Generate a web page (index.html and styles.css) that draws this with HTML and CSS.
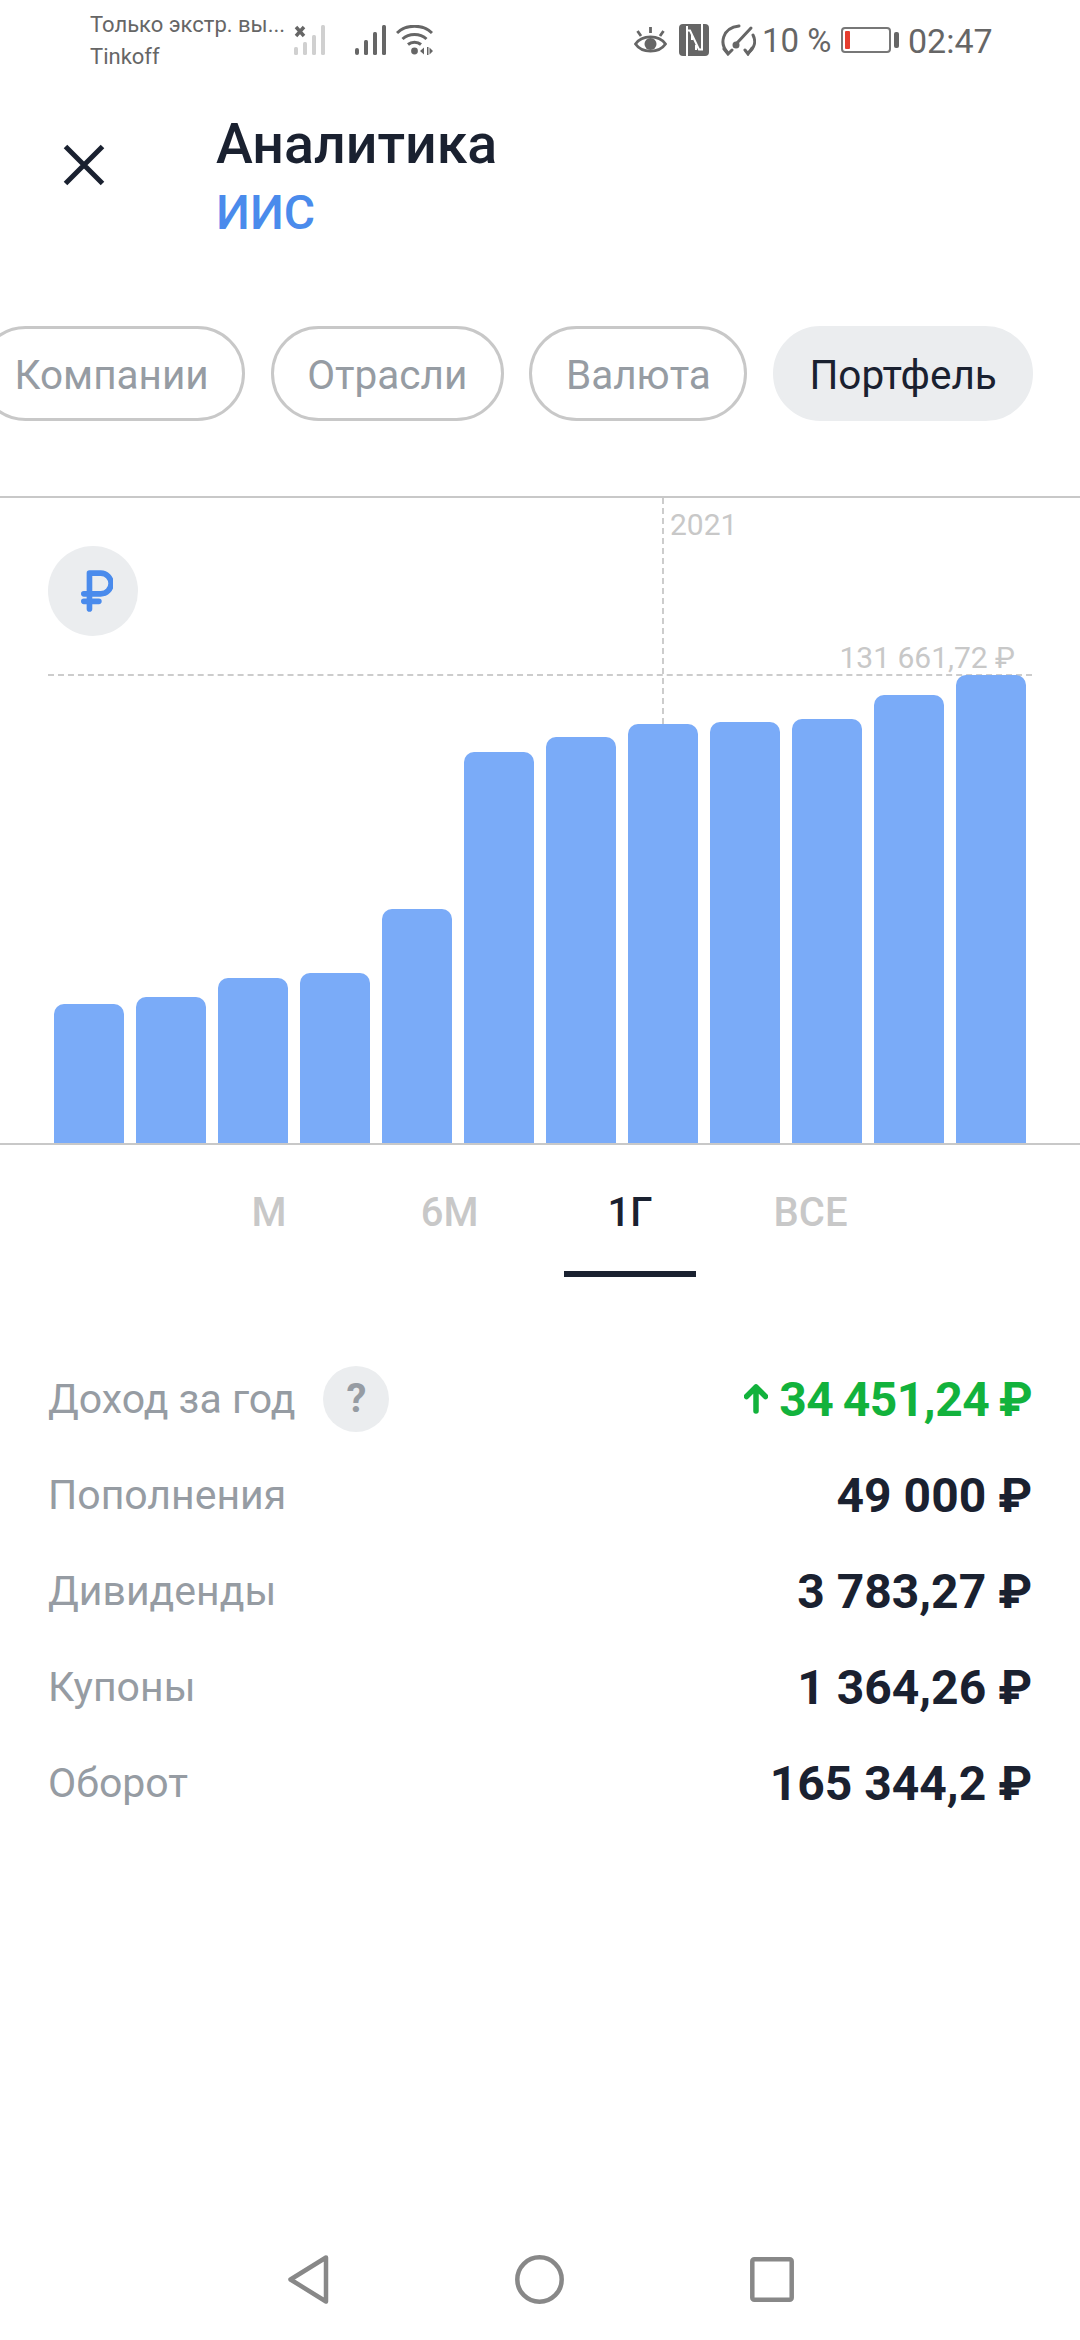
FILE: index.html
```html
<!DOCTYPE html>
<html lang="ru">
<head>
<meta charset="utf-8">
<title>Аналитика</title>
<link rel="stylesheet" href="styles.css">
</head>
<body>
<div class="page">
  <div class="status">
    <div class="status-text"><div>Только экстр. вы...</div><div>Tinkoff</div></div>
    <svg class="ic-sig1" width="32" height="30" viewBox="0 0 32 30">
      <g fill="#d0d0d0"><rect x="0" y="22" width="4" height="8" rx="1.5"/><rect x="9" y="17" width="4" height="13" rx="1.5"/><rect x="18" y="10" width="4" height="20" rx="1.5"/><rect x="27" y="0" width="4" height="30" rx="1.5"/></g>
      <path d="M2 2l8 9M10 2l-8 9" stroke="#666" stroke-width="3.4" fill="none"/>
    </svg>
    <svg class="ic-sig2" width="32" height="30" viewBox="0 0 32 30">
      <g fill="#666"><rect x="0" y="23" width="4" height="7" rx="2"/><rect x="9" y="15" width="4" height="15" rx="1.5"/><rect x="18" y="7" width="4" height="23" rx="1.5"/><rect x="27" y="0" width="4" height="30" rx="1.5"/></g>
    </svg>
    <svg class="ic-wifi" width="37" height="30" viewBox="0 0 37 30">
      <g fill="none" stroke="#666" stroke-width="3"><path d="M1 8C10 -1 27 -1 36 8"/><path d="M6.500 14C13 8 24 8 30.500 14"/><path d="M12 19.500C15.500 16.500 21.500 16.500 25 19.500"/></g>
      <circle cx="18.500" cy="26" r="3.400" fill="#666"/>
      <path d="M24 26l4-3.500v7zM31 22h1.500v8H31zM33.500 22.500l3.500 3.500-3.500 3.500z" fill="#666"/>
    </svg>
    <svg class="ic-eye" width="33" height="28" viewBox="0 0 33 28">
      <path d="M1.500 18C8 8.500 25 8.500 31.500 18 25 27.500 8 27.500 1.500 18Z" fill="none" stroke="#666" stroke-width="2.800"/>
      <circle cx="16.500" cy="18" r="6" fill="#666"/>
      <path d="M16.500 1v6M3.500 5l3.500 5M29.500 5l-3.500 5" stroke="#666" stroke-width="2.800" fill="none"/>
    </svg>
    <svg class="ic-nfc" width="30" height="32" viewBox="0 0 30 32">
      <rect width="30" height="32" rx="4" fill="#666"/>
      <path d="M8 32V6.500h3L20 25.500h3V0" fill="none" stroke="#fff" stroke-width="2"/>
      <path d="M8 6.500V2M13 16V11M17 26V21" stroke="#fff" stroke-width="2" fill="none"/>
    </svg>
    <svg class="ic-speed" width="36" height="32" viewBox="0 0 36 32">
      <g fill="none" stroke="#666" stroke-width="3" stroke-linecap="round"><path d="M8 29C-1 20 2 4 19 2"/><path d="M28 29c7-5 8-12 5-18"/><path d="M4 25l4 5 4-4M25 26l3 4 4-6"/><path d="M17 19L31 4"/></g>
      <circle cx="16" cy="21" r="3.500" fill="#666"/>
    </svg>
    <span class="status-pct">10 %</span>
    <div class="battery"><div class="battery-body"><div class="battery-fill"></div></div><div class="battery-cap"></div></div>
    <span class="status-time">02:47</span>
  </div>

  <header class="head">
    <svg class="close" width="42" height="42" viewBox="0 0 42 42"><path d="M2.500 2.500l37 37M39.500 2.500l-37 37" stroke="#1a2130" stroke-width="5" fill="none"/></svg>
    <div>
      <h1 class="title">Аналитика</h1>
      <div class="subtitle">ИИС</div>
    </div>
  </header>

  <nav class="chips">
    <span class="chip chip-first">Компании</span>
    <span class="chip">Отрасли</span>
    <span class="chip">Валюта</span>
    <span class="chip chip-on">Портфель</span>
  </nav>

  <section class="chart">
    <div class="rub-badge">
      <svg width="34" height="44" viewBox="0 0 34 44"><path d="M9 41V3h12a11 11 0 0 1 0 22H3M3 33h16" fill="none" stroke="#4a8bec" stroke-width="6" stroke-linecap="round" stroke-linejoin="round"/></svg>
    </div>
    <div class="vline"></div>
    <div class="hline"></div>
    <span class="year">2021</span>
    <span class="maxval">131 661,72 ₽</span>
    <div class="bars">
      <div class="bar" style="height:139px"></div>
      <div class="bar" style="height:146px"></div>
      <div class="bar" style="height:165px"></div>
      <div class="bar" style="height:170px"></div>
      <div class="bar" style="height:234px"></div>
      <div class="bar" style="height:391px"></div>
      <div class="bar" style="height:406px"></div>
      <div class="bar" style="height:419px"></div>
      <div class="bar" style="height:421px"></div>
      <div class="bar" style="height:424px"></div>
      <div class="bar" style="height:448px"></div>
      <div class="bar" style="height:468px"></div>
    </div>
  </section>

  <div class="tabs">
    <span class="tab">М</span>
    <span class="tab">6М</span>
    <span class="tab tab-on">1Г</span>
    <span class="tab">ВСЕ</span>
  </div>

  <section class="rows">
    <div class="row">
      <div class="row-label"><span>Доход за год</span><span class="help">?</span></div>
      <div class="row-value value-up">
        <svg width="24" height="30" viewBox="0 0 24 30"><path d="M12 27V3M2.500 12.500L12 3l9.500 9.500" fill="none" stroke="#12b23c" stroke-width="5.500" stroke-linecap="round" stroke-linejoin="round"/></svg>
        <span class="value-up-num">34 451,24 ₽</span>
      </div>
    </div>
    <div class="row"><div class="row-label">Пополнения</div><div class="row-value">49 000 ₽</div></div>
    <div class="row"><div class="row-label">Дивиденды</div><div class="row-value">3 783,27 ₽</div></div>
    <div class="row"><div class="row-label">Купоны</div><div class="row-value">1 364,26 ₽</div></div>
    <div class="row"><div class="row-label">Оборот</div><div class="row-value">165 344,2 ₽</div></div>
  </section>

  <footer class="navbar">
    <svg width="41" height="49" viewBox="0 0 41 49"><path d="M38 2.500L2.500 24.500 38 46.500Z" fill="none" stroke="#888" stroke-width="4.500" stroke-linejoin="round"/></svg>
    <svg width="49" height="49" viewBox="0 0 49 49"><circle cx="24.500" cy="24.500" r="22.200" fill="none" stroke="#888" stroke-width="4.500"/></svg>
    <svg width="44" height="45" viewBox="0 0 44 45"><rect x="2.300" y="2.300" width="39.400" height="40.400" rx="2" fill="none" stroke="#888" stroke-width="4.500"/></svg>
  </footer>
</div>
</body>
</html>
```
FILE: styles.css
```css
* { box-sizing: border-box; }
html, body { margin: 0; padding: 0; background: #fff; }
body { font-family: Roboto, "Liberation Sans", sans-serif; color: #1a2130; }
.page { width: 1080px; height: 2340px; display: flex; flex-direction: column; overflow: hidden; }

/* status bar */
.status { height: 80px; display: flex; align-items: flex-start; padding: 0 0 0 90px; color: #666; flex: none; }
.status-text { width: 204px; padding-top: 9px; font-size: 22px; line-height: 32px; white-space: nowrap; }
.ic-sig1 { margin-top: 25px; }
.ic-sig2 { margin: 25px 0 0 29px; }
.ic-wifi { margin: 25px 0 0 9px; }
.ic-eye { margin: 26px 0 0 201px; }
.ic-nfc { margin: 24px 0 0 12px; }
.ic-speed { margin: 24px 0 0 11px; }
.status-pct { margin: 21px 0 0 6px; font-size: 33px; line-height: 40px; width: 79px; white-space: nowrap; }
.battery { margin-top: 27px; display: flex; align-items: center; height: 26px; }
.battery-body { width: 50px; height: 26px; border: 2px solid #777; border-radius: 4px; padding: 2px; }
.battery-fill { width: 5px; height: 100%; background: #e53c2e; border-radius: 1px; }
.battery-cap { width: 5px; height: 16px; margin-left: 3px; background: #666; border-radius: 2px; }
.status-time { margin: 21px 0 0 9px; font-size: 34px; line-height: 40px; }

/* header */
.head { height: 166px; flex: none; display: flex; align-items: flex-start; padding: 32px 0 0 63px; }
.close { margin-top: 32px; margin-right: 111px; }
.title { margin: 0; font-size: 55.500px; line-height: 66px; font-weight: 500; }
.subtitle { margin-top: 2px; font-size: 48px; line-height: 66px; font-weight: 500; color: #4a8bec; }

/* chips */
.chips { margin-top: 80px; height: 95px; flex: none; display: flex; gap: 25.600px; margin-left: -22px; }
.chip { height: 95px; border: 3px solid #c8c8c8; border-radius: 47.500px; font-size: 40.500px; line-height: 92px; color: #969ca3; padding: 0 33.500px; white-space: nowrap; }
.chip-on { background: #ebedef; border-color: #ebedef; color: #1a2130; }

/* chart */
.chart { position: relative; margin-top: 75px; height: 649px; flex: none; border-top: 2px solid #c8c8c8; border-bottom: 2px solid #c8c8c8; }
.rub-badge { position: absolute; left: 48px; top: 48px; width: 90px; height: 90px; border-radius: 50%; background: #ebedef; display: flex; align-items: center; justify-content: center; }
.rub-badge svg { width: 32px; height: 42px; margin-left: 8px; }
.vline { position: absolute; left: 662px; top: 0; height: 226px; border-left: 2px dashed #ccc; }
.hline { position: absolute; left: 48px; width: 984px; top: 176px; border-top: 2px dashed #ccc; }
.year { position: absolute; left: 670px; top: 7px; font-size: 30px; line-height: 40px; color: #c8c8c8; }
.maxval { position: absolute; right: 65px; top: 140px; font-size: 30px; line-height: 40px; color: #c8c8c8; white-space: nowrap; }
.bars { position: absolute; left: 54px; bottom: 0; display: flex; align-items: flex-end; gap: 12.500px; }
.bar { width: 69.500px; background: #7aabf8; border-radius: 10px 10px 0 0; }

/* tabs */
.tabs { flex: none; display: flex; gap: 48.500px; padding-left: 203px; }
.tab { width: 132px; height: 132px; padding-top: 38px; font-size: 40px; line-height: 60px; font-weight: 500; color: #c8c8c8; text-align: center; border-bottom: 6px solid transparent; }
.tab-on { color: #1a2130; border-bottom-color: #1a2130; }

/* rows */
.rows { margin-top: 74px; flex: none; padding: 0 48px; }
.row { height: 96px; display: flex; align-items: center; justify-content: space-between; }
.row-label { display: flex; align-items: center; gap: 28px; font-size: 41px; color: #969ca3; }
.help { width: 66px; height: 66px; border-radius: 50%; background: #ebedef; font-size: 40px; font-weight: 700; line-height: 66px; text-align: center; color: #969ca3; }
.row-value { display: flex; align-items: center; font-size: 48px; font-weight: 700; white-space: nowrap; }
.value-up { color: #12b23c; gap: 11px; }
.value-up-num { letter-spacing: -0.500px; word-spacing: -2px; }

/* nav bar */
.navbar { margin-top: auto; flex: none; display: flex; align-items: center; gap: 186px; padding: 0 0 36px 288px; }
```
